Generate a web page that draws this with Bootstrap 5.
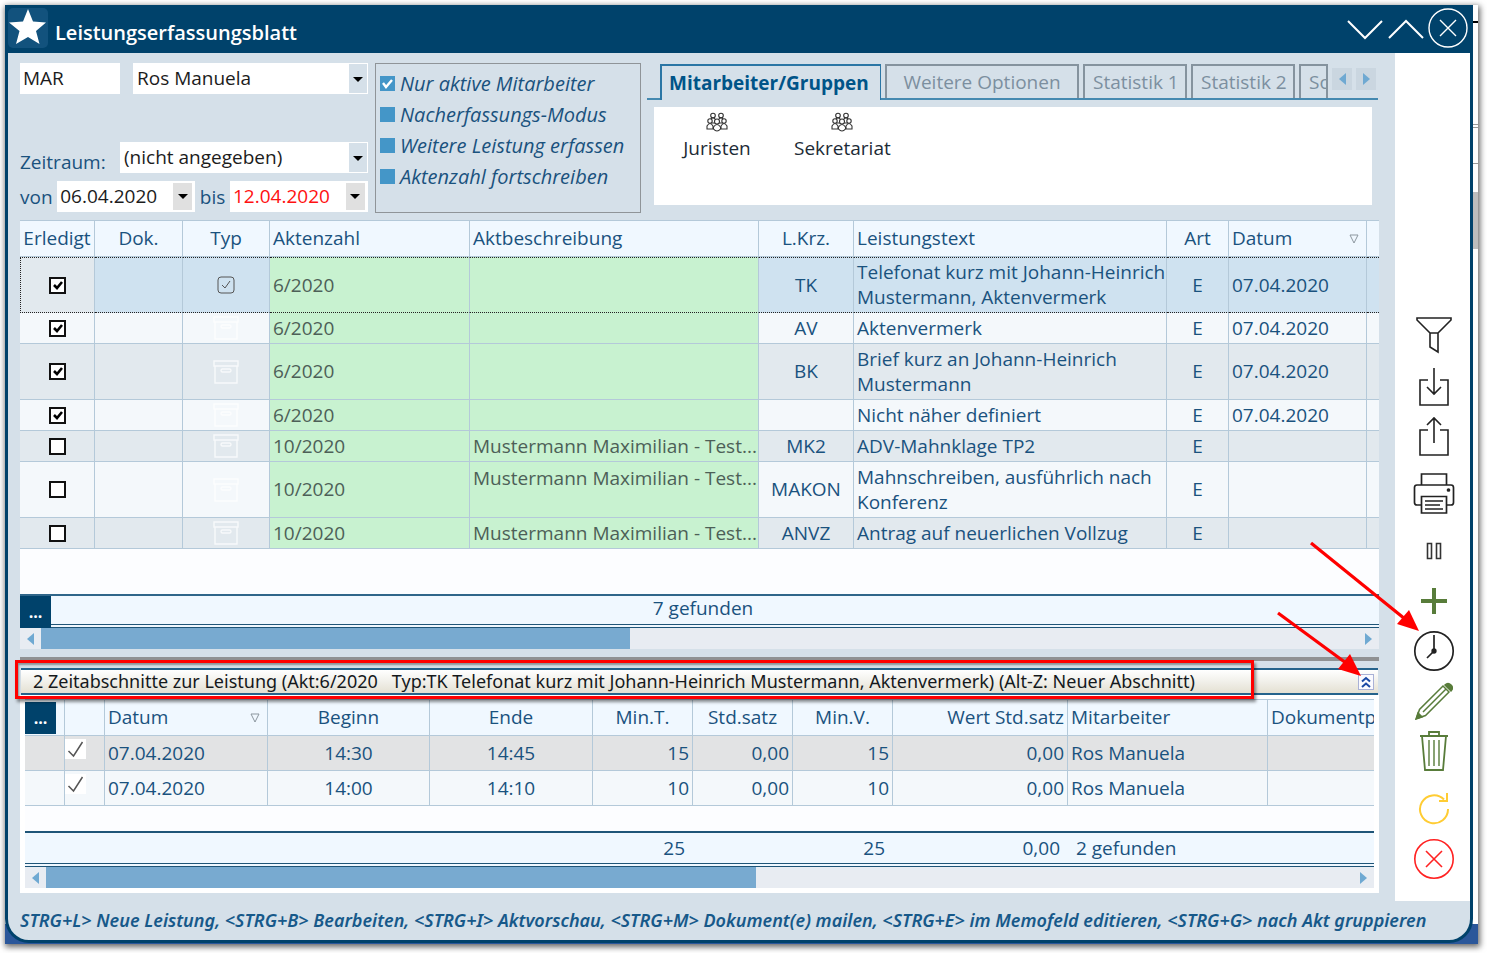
<!DOCTYPE html>
<html lang="de">
<head>
<meta charset="utf-8">
<meta name="viewport" content="width=device-width, initial-scale=1">
<title>Leistungserfassungsblatt</title>
<link href="https://cdn.jsdelivr.net/npm/bootstrap@5.3.0/dist/css/bootstrap.min.css" rel="stylesheet">
<style>
:root{--navy:#00426b;--ink:#1a527e;--panel:#d5e0e9;--line:#b4c9d9;--blue:#78aad0;--green:#587c3a}
body{font-family:"Open Sans","Noto Sans",sans-serif;font-size:19px;line-height:25px;color:var(--ink);background:#fff;padding:5px 9px 9px 5px;min-height:100vh;display:flex}
button{font:inherit;color:inherit;background:none;border:0;padding:0}
svg{display:block;flex:none}
.desktop{flex:1;min-width:0;padding:0 5px 1px 0;display:flex;position:relative;overflow:hidden;
 background:linear-gradient(#000,#000) 0 16px/100% 2px no-repeat,linear-gradient(#999,#999) 0 119px/100% 1px no-repeat,linear-gradient(#999,#999) 0 122px/100% 1px no-repeat,linear-gradient(#999,#999) 0 158px/100% 1px no-repeat,linear-gradient(#bdbdbd,#bdbdbd) 0 187px/100% 57px no-repeat,linear-gradient(#2b579a,#2b579a) 0 100%/100% 20px no-repeat,#fff}
.shot{flex:1;min-width:0;display:flex;box-shadow:1px 2px 6px 1px rgba(0,0,0,.6)}
.app{flex:1;min-width:0;display:flex;flex-direction:column;position:relative;background:var(--panel);border:solid var(--navy);border-width:0 3px 3px 3px;border-radius:0 0 24px 24px;overflow:hidden}
.titlebar{height:48px;background:var(--navy);color:#fff}
.titlebar h1{font-size:20px;line-height:28px;font-weight:600;margin:7px 0 0 7px}
.logo{width:40px;height:40px;background:#12527d;border-radius:5px;margin-top:-2px}
.wincontrols{gap:4px;margin-top:-3px;padding-right:2px}
.main{padding:10px 16px 8px 12px}
.toparea{height:157px}
.fields{width:348px}
.frow{height:31px;display:flex;justify-content:space-between;align-items:flex-start}
.fld{height:31px;border:0;border-radius:0;background-color:#fff;color:#1c1c1c;padding:0 3px;min-width:0;line-height:31px}
.fld:focus{outline:1px solid var(--blue)}
select.fld{appearance:none;padding-left:4px;background-image:url("data:image/svg+xml,%3Csvg xmlns='http://www.w3.org/2000/svg' width='18' height='29'%3E%3Crect width='18' height='29' fill='%23d5e0e9'/%3E%3Cpath d='M4 13h10l-5 5z'/%3E%3C/svg%3E");background-repeat:no-repeat;background-position:right 1px top 1px}
.w-code{width:100px}.w-name{width:235px}.w-period{width:248px}
.datebox{background:#fff;width:138px;height:31px}
.datebox .fld{flex:1;width:100px}
.datebox button{width:19px;height:27px;background:#e0e0e0;margin-right:3px;display:grid;place-items:center}
.overdue{color:#f11!important}
.options{width:266px;height:150px;border:1px solid #8f9498;margin:0 0 0 7px;padding:4px 4px;font-style:italic;font-size:20px}
.options label{height:31px;display:flex;align-items:center;gap:5px;white-space:nowrap}
.options input{appearance:none;width:15px;height:15px;background:#4496c8;margin:0;flex:none}
.options input:checked{background:#4496c8 url("data:image/svg+xml,%3Csvg xmlns='http://www.w3.org/2000/svg' width='15' height='15'%3E%3Cpath d='M3 7l3 4 6-7' fill='none' stroke='%23fff' stroke-width='2.4'/%3E%3C/svg%3E")}
.tabarea{min-width:0;margin-left:6px}
.tabs{height:36px;border-bottom:2px solid #4589b0;margin:1px 1px 0 0;padding-left:13px;gap:4px;flex-wrap:nowrap;list-style:none}
.tabs button.tab{height:34px;border:2px solid #85939e;border-bottom:0;color:#7c8f9f;white-space:nowrap;overflow:hidden;text-align:left;padding:0 8px;width:100%}
.tabs button.on{height:36px;border:2px solid #2b76a5;border-bottom:0;border-right-width:1px;background:var(--panel);color:#005488;font-weight:700;padding:0 7px}
.scroller{width:20px;height:22px;background:#cad6e0;display:grid;place-items:center;margin-top:4px}
.groups{background:#fff;height:98px;margin:7px 7px 0 7px;color:#1d2b36;gap:36px;padding:5px 22px}
.groups button{min-width:82px}
.gridtab{table-layout:fixed;width:100%;border-collapse:separate;border-spacing:0}
.gridtab th,.gridtab td{border:solid var(--line);border-width:0 1px 1px 0;padding:0 3px;font-weight:400;overflow:hidden;white-space:nowrap;vertical-align:middle;text-overflow:clip}
.gridtab th:last-child,.gridtab td:last-child{border-right:0}
.gridtab thead th{background:#f0f8ff;height:36px}
.gridtab .c{text-align:center}.gridtab .r{text-align:right}
.gridtab svg{margin:auto}
.upper{background:#fcfdff;min-height:374px;border-top:1px solid var(--line)}
.upper tbody td{height:31px;background:#f4f8fb}
.upper tbody tr:nth-child(odd) td{background:#e2e9ee}
.upper tbody tr.tall td{height:56px}
.upper tbody tr td.akt{background:#c8f2d0!important;color:#4d6057;padding-right:0}
.upper td.wrap{white-space:normal;padding-right:0}
.upper tbody tr.cur td{background:#cfe2f0;border-top:1px dotted #222;border-bottom:1px dotted #222}
.upper tbody tr.cur td:first-child{background:#e2e9ee;border-left:1px dotted #222}
.box{appearance:none;width:17px;height:17px;border:2px solid #111;background:#fff;display:block;margin:0 auto;border-radius:0}
.box:checked{background:#fff url("data:image/svg+xml,%3Csvg xmlns='http://www.w3.org/2000/svg' width='13' height='13'%3E%3Cpath d='M3 6l3 3 5-6' fill='none' stroke='%23000' stroke-width='2.6'/%3E%3C/svg%3E")}
.more{background:var(--navy);color:#fff!important;width:31px;height:32px;font-weight:700;font-size:16px;line-height:32px;text-align:center;display:block}
.sumbar{height:34px;border-top:2px solid #2f668a;border-bottom:4px double #1f5578;background:#f0f8ff}
.hscroll{height:21px;background:#e8ecf2}
.hscroll button{width:21px;height:21px;display:grid;place-items:center}
.hscroll .thumb{height:21px;background:var(--blue)}
.splitter{height:4px;background:#8f9193;margin-top:8px}
.section{height:27px;margin:7px 1px 0 1px;border:solid #25638c;border-width:2px 0;background:linear-gradient(#fff,#f1f0ea 50%,#e4e0d2);color:#15191c;position:relative;padding:0 4px 0 12px}
.section span{white-space:pre;font-family:"Noto Sans",sans-serif;font-size:18px}
.callout{position:absolute;left:-6px;right:124px;top:-10px;height:39px;border:3px solid #f00;box-shadow:2px 3px 3px rgba(0,0,0,.45),inset 1px 2px 2px rgba(0,0,0,.35);pointer-events:none}
.toggle{width:16px;height:16px;border:1px solid #a9b1d6!important;background:#fafaff!important;display:grid;place-items:center}
.lower{background:#fff;padding:4px 5px 5px}
.lower thead th{border-top:1px solid var(--line);height:37px}
.lower tbody td{height:35px;background:#f4f8fb}
.lower tbody tr:first-child td{background:#e2e3e4}
.lower tbody td svg{margin:-8px 0 0 0;background:#fff}
.lower tfoot .gap td{height:25px;border:0;background:#fcfdff}
.lower tfoot .sum td{height:36px;border:solid #1f5578;border-width:2px 0 4px;border-bottom-style:double;background:#f0f8ff;padding:0 8px}
.rail{width:75px;background:#fff;padding:0 0 17px 1px}
.rail button{height:50px;width:75px;display:grid;place-items:center}
.statusline{height:39px;line-height:39px;padding:0 13px 0 12px;font-family:"Noto Sans",sans-serif;font-style:italic;font-weight:600;font-size:18px;color:#17598a}
.statusline div{overflow:hidden;white-space:nowrap}
.arrows{position:absolute;right:49px;top:530px;pointer-events:none}
</style>
</head>
<body>
<svg width="0" height="0" class="position-absolute">
<symbol id="arch" viewBox="0 0 26 24"><g fill="none" stroke="#fff" stroke-opacity=".75" stroke-width="1.4"><path d="M1 1h24v5H1zM2 6v17h22V6"/><rect x="8" y="9" width="10" height="3" rx="1.500"/></g></symbol>
<symbol id="left" viewBox="0 0 7 12"><path d="M7 0v12L0 6z" fill="#6fa9d2"/></symbol>
<symbol id="right" viewBox="0 0 7 12"><path d="M0 0v12l7-6z" fill="#6fa9d2"/></symbol>
<symbol id="sort" viewBox="0 0 10 10"><path d="M1 1h8L5 9z" fill="none" stroke="#8c979f"/></symbol>
<symbol id="tick" viewBox="0 0 20 20"><path d="M3 12l5 5L17 3" fill="none" stroke="#555" stroke-width="1.500"/></symbol>
<symbol id="people" viewBox="0 0 22 20"><g fill="#fff" stroke="#333" stroke-width="1.100"><circle cx="7" cy="3.500" r="2.300"/><circle cx="15" cy="3.500" r="2.300"/><path d="M4 11V8q3-4 6 0v3zM12 11V8q3-4 6 0v3z"/><circle cx="4" cy="9" r="2.200"/><circle cx="18" cy="9" r="2.200"/><path d="M1 17v-3q3-5 6 0v3zM15 17v-3q3-5 6 0v3z"/><circle cx="11" cy="9.500" r="2.500"/><path d="M7.500 17v-2q3.500-5 7 0v2q-3.500 4-7 0z"/></g></symbol>
</svg>
<div class="shot">
<div class="desktop">
<main class="app">
  <header class="titlebar d-flex align-items-center">
    <div class="logo"><svg width="40" height="40" viewBox="0 0 40 40"><path fill="#fff" d="M20 1l5 12.500 13 1-10 8.500 3.500 13L20 29 8 36l3.500-13L1 14.500l14-1z"/></svg></div>
    <h1>Leistungserfassungsblatt</h1>
    <div class="wincontrols d-flex align-items-center ms-auto">
      <button type="button" aria-label="Minimieren"><svg width="37" height="40" viewBox="0 0 37 40" fill="none" stroke="#fff" stroke-width="2"><path d="M2 13l17 17L36 13"/></svg></button>
      <button type="button" aria-label="Maximieren"><svg width="37" height="40" viewBox="0 0 37 40" fill="none" stroke="#fff" stroke-width="2"><path d="M2 30l17-17L36 30"/></svg></button>
      <button type="button" aria-label="Schließen"><svg width="40" height="40" viewBox="0 0 40 40" fill="none" stroke="#fff" stroke-width="1.400"><circle cx="20" cy="20" r="19"/><path d="M12 12l16 16M28 12L12 28"/></svg></button>
    </div>
  </header>
  <div class="d-flex flex-grow-1">
    <div class="main flex-grow-1 d-flex flex-column overflow-hidden">
      <div class="toparea d-flex">
        <div class="fields d-flex flex-column">
          <div class="frow">
            <input class="fld w-code" value="MAR" aria-label="Kürzel">
            <select class="fld w-name" aria-label="Mitarbeiter"><option>Ros Manuela</option></select>
          </div>
          <div class="frow mt-auto">
            <label for="zr" class="pt-2">Zeitraum:</label>
            <select id="zr" class="fld w-period"><option>(nicht angegeben)</option></select>
          </div>
          <div class="frow mt-2 mb-2">
            <label for="von" class="pt-1">von</label>
            <div class="datebox d-flex align-items-center"><input id="von" class="fld" value="06.04.2020"><button type="button" aria-label="Kalender von"><svg width="10" height="6"><path d="M0 0h10L5 5z"/></svg></button></div>
            <label for="bis" class="pt-1">bis</label>
            <div class="datebox d-flex align-items-center"><input id="bis" class="fld overdue" value="12.04.2020"><button type="button" aria-label="Kalender bis"><svg width="10" height="6"><path d="M0 0h10L5 5z"/></svg></button></div>
          </div>
        </div>
        <fieldset class="options">
          <label><input type="checkbox" checked>Nur aktive Mitarbeiter</label>
          <label><input type="checkbox">Nacherfassungs-Modus</label>
          <label><input type="checkbox">Weitere Leistung erfassen</label>
          <label><input type="checkbox">Aktenzahl fortschreiben</label>
        </fieldset>
        <div class="tabarea flex-grow-1">
          <ul class="tabs d-flex mb-0">
            <li style="width:221px"><button type="button" class="tab on">Mitarbeiter/Gruppen</button></li>
            <li style="width:194px"><button type="button" class="tab text-center">Weitere Optionen</button></li>
            <li style="width:104px"><button type="button" class="tab">Statistik 1</button></li>
            <li style="width:104px"><button type="button" class="tab">Statistik 2</button></li>
            <li style="width:29px"><button type="button" class="tab" aria-label="Sonstiges">Sonstiges</button></li>
            <li><button type="button" class="scroller" aria-label="Zurück"><svg width="7" height="12"><use href="#left"/></svg></button></li>
            <li><button type="button" class="scroller" aria-label="Weiter"><svg width="7" height="12"><use href="#right"/></svg></button></li>
          </ul>
          <div class="groups d-flex align-items-start">
            <button type="button"><svg class="mx-auto mb-1" width="22" height="20"><use href="#people"/></svg>Juristen</button>
            <button type="button"><svg class="mx-auto mb-1" width="22" height="20"><use href="#people"/></svg>Sekretariat</button>
          </div>
        </div>
      </div>

      <div class="upper flex-grow-1">
        <table class="gridtab">
          <colgroup><col style="width:75px"><col style="width:88px"><col style="width:87px"><col style="width:200px"><col style="width:289px"><col style="width:95px"><col style="width:313px"><col style="width:62px"><col style="width:138px"><col></colgroup>
          <thead><tr><th class="c">Erledigt</th><th class="c">Dok.</th><th class="c">Typ</th><th>Aktenzahl</th><th>Aktbeschreibung</th><th class="c">L.Krz.</th><th>Leistungstext</th><th class="c">Art</th><th><div class="d-flex align-items-center justify-content-between pe-1">Datum<svg class="m-0" width="10" height="10"><use href="#sort"/></svg></div></th><th></th></tr></thead>
          <tbody>
            <tr class="tall cur"><td><input class="box" type="checkbox" checked aria-label="Erledigt"></td><td></td><td><svg width="18" height="18" viewBox="0 0 18 18" fill="none" stroke="#555"><rect x="1" y="1" width="16" height="16" rx="3"/><path d="M5 9l3 3 5-7"/></svg></td><td class="akt">6/2020</td><td class="akt"></td><td class="c">TK</td><td class="wrap">Telefonat kurz mit Johann-Heinrich Mustermann, Aktenvermerk</td><td class="c">E</td><td>07.04.2020</td><td></td></tr>
            <tr><td><input class="box" type="checkbox" checked aria-label="Erledigt"></td><td></td><td><svg width="26" height="24"><use href="#arch"/></svg></td><td class="akt">6/2020</td><td class="akt"></td><td class="c">AV</td><td>Aktenvermerk</td><td class="c">E</td><td>07.04.2020</td><td></td></tr>
            <tr class="tall"><td><input class="box" type="checkbox" checked aria-label="Erledigt"></td><td></td><td><svg width="26" height="24"><use href="#arch"/></svg></td><td class="akt">6/2020</td><td class="akt"></td><td class="c">BK</td><td class="wrap">Brief kurz an Johann-Heinrich Mustermann</td><td class="c">E</td><td>07.04.2020</td><td></td></tr>
            <tr><td><input class="box" type="checkbox" checked aria-label="Erledigt"></td><td></td><td><svg width="26" height="24"><use href="#arch"/></svg></td><td class="akt">6/2020</td><td class="akt"></td><td></td><td>Nicht näher definiert</td><td class="c">E</td><td>07.04.2020</td><td></td></tr>
            <tr><td><input class="box" type="checkbox" aria-label="Erledigt"></td><td></td><td><svg width="26" height="24"><use href="#arch"/></svg></td><td class="akt">10/2020</td><td class="akt">Mustermann Maximilian - Test...</td><td class="c">MK2</td><td>ADV-Mahnklage TP2</td><td class="c">E</td><td></td><td></td></tr>
            <tr class="tall"><td><input class="box" type="checkbox" aria-label="Erledigt"></td><td></td><td><svg width="26" height="24"><use href="#arch"/></svg></td><td class="akt">10/2020</td><td class="akt align-top pt-1">Mustermann Maximilian - Test...</td><td class="c">MAKON</td><td class="wrap">Mahnschreiben, ausführlich nach Konferenz</td><td class="c">E</td><td></td><td></td></tr>
            <tr><td><input class="box" type="checkbox" aria-label="Erledigt"></td><td></td><td><svg width="26" height="24"><use href="#arch"/></svg></td><td class="akt">10/2020</td><td class="akt">Mustermann Maximilian - Test...</td><td class="c">ANVZ</td><td>Antrag auf neuerlichen Vollzug</td><td class="c">E</td><td></td><td></td></tr>
          </tbody>
        </table>
      </div>
      <div class="sumbar d-flex"><button type="button" class="more">...</button><div class="flex-grow-1 text-center pe-4">7 gefunden</div></div>
      <div class="hscroll d-flex"><button type="button" aria-label="Links"><svg width="7" height="12"><use href="#left"/></svg></button><div class="flex-grow-1"><div class="thumb" style="width:44.700%"></div></div><button type="button" aria-label="Rechts"><svg width="7" height="12"><use href="#right"/></svg></button></div>
      <div class="splitter"></div>
      <div class="section d-flex align-items-center justify-content-between">
        <span>2 Zeitabschnitte zur Leistung (Akt:6/2020   Typ:TK Telefonat kurz mit Johann-Heinrich Mustermann, Aktenvermerk) (Alt-Z: Neuer Abschnitt)</span>
        <button type="button" class="toggle" aria-label="Einklappen"><svg width="10" height="12" viewBox="0 0 10 12" fill="none" stroke="#1a49a5" stroke-width="2"><path d="M1 5.500L5 2l4 3.500M1 11l4-3.500L9 11"/></svg></button>
        <div class="callout"></div>
      </div>
      <div class="lower">
        <table class="gridtab">
          <colgroup><col style="width:40px"><col style="width:40px"><col style="width:163px"><col style="width:162px"><col style="width:163px"><col style="width:100px"><col style="width:100px"><col style="width:100px"><col style="width:175px"><col style="width:200px"><col></colgroup>
          <thead><tr><th class="p-0"><button type="button" class="more">...</button></th><th></th><th><div class="d-flex align-items-center justify-content-between pe-1">Datum<svg class="m-0" width="10" height="10"><use href="#sort"/></svg></div></th><th class="c">Beginn</th><th class="c">Ende</th><th class="c">Min.T.</th><th class="c">Std.satz</th><th class="c">Min.V.</th><th class="r">Wert Std.satz</th><th>Mitarbeiter</th><th>Dokumentpfad</th></tr></thead>
          <tbody>
            <tr><td></td><td class="ps-0"><svg width="21" height="20" viewBox="0 0 20 20"><use href="#tick"/></svg></td><td>07.04.2020</td><td class="c">14:30</td><td class="c">14:45</td><td class="r">15</td><td class="r">0,00</td><td class="r">15</td><td class="r">0,00</td><td>Ros Manuela</td><td></td></tr>
            <tr><td></td><td class="ps-0"><svg width="21" height="20" viewBox="0 0 20 20"><use href="#tick"/></svg></td><td>07.04.2020</td><td class="c">14:00</td><td class="c">14:10</td><td class="r">10</td><td class="r">0,00</td><td class="r">10</td><td class="r">0,00</td><td>Ros Manuela</td><td></td></tr>
          </tbody>
          <tfoot>
            <tr class="gap"><td colspan="11"></td></tr>
            <tr class="sum"><td colspan="5"></td><td class="r">25</td><td></td><td class="r">25</td><td class="r">0,00</td><td>2 gefunden</td><td></td></tr>
          </tfoot>
        </table>
        <div class="hscroll d-flex"><button type="button" aria-label="Links"><svg width="7" height="12"><use href="#left"/></svg></button><div class="flex-grow-1"><div class="thumb" style="width:54.300%"></div></div><button type="button" aria-label="Rechts"><svg width="7" height="12"><use href="#right"/></svg></button></div>
      </div>
    </div>

    <nav class="rail d-flex flex-column justify-content-end flex-shrink-0" aria-label="Werkzeuge">
      <button type="button" aria-label="Filter"><svg width="40" height="40" viewBox="0 0 40 40" fill="none" stroke="#222" stroke-width="1.600"><path d="M3 3h34v2L24 18H16L3 5zM16 18v14l8 5V18"/></svg></button>
      <button type="button" aria-label="Importieren"><svg width="40" height="44" viewBox="0 0 40 44" fill="none" stroke="#222" stroke-width="1.600"><path d="M14 17H6v25h28V17h-8M20 5v26M13 24l7 7 7-7"/></svg></button>
      <button type="button" aria-label="Exportieren"><svg width="40" height="44" viewBox="0 0 40 44" fill="none" stroke="#222" stroke-width="1.600"><path d="M14 17H6v25h28V17h-8M20 30V5M13 12l7-7 7 7"/></svg></button>
      <button type="button" class="mt-2" aria-label="Drucken"><svg width="42" height="42" viewBox="0 0 42 42" fill="none" stroke="#222" stroke-width="1.700"><path d="M8.500 13V2h25v11M8.500 33H4q-2.500 0-2.500-2.500v-15Q1.500 13 4 13h34q2.500 0 2.500 2.500v15Q40.500 33 38 33h-4.500"/><path d="M8.500 24.500h25V41h-25zM12 29h18M12 33h15M12 37h18"/><circle cx="35.500" cy="18" r="1" fill="#222"/></svg></button>
      <button type="button" class="mt-2" aria-label="Pause"><svg width="16" height="18" viewBox="0 0 16 18" fill="none" stroke="#333" stroke-width="1.600"><path d="M1.500 1.500h4v15h-4zM10.500 1.500h4v15h-4z"/></svg></button>
      <button type="button" aria-label="Neu"><svg width="28" height="28" viewBox="0 0 28 28" stroke="#587c3a" stroke-width="4"><path d="M14 1v26M1 14h26"/></svg></button>
      <button type="button" aria-label="Zeit"><svg width="42" height="42" viewBox="0 0 42 42" fill="none" stroke="#222" stroke-width="1.700"><circle cx="21" cy="21" r="19.200"/><path d="M21 5v16l-7 7"/><circle cx="21" cy="21" r="1.800" fill="#222"/></svg></button>
      <button type="button" aria-label="Bearbeiten"><svg width="38" height="38" viewBox="0 0 38 38" fill="none" stroke="#587c3a" stroke-width="1.500"><path d="M1.500 36.500l3-9L28 4l6 6L10.500 33.500zM8 30L31 7"/><path d="M1 37l2-6 4 4zM30 3q3-3 6 0t0 6z" fill="#587c3a"/></svg></button>
      <button type="button" aria-label="Löschen"><svg width="30" height="42" viewBox="0 0 30 42" fill="none" stroke="#587c3a" stroke-width="1.800"><path d="M1 6h28M10 6V2h10v4M3 6l3 34h18l3-34"/><path stroke-width="1.400" d="M10 10v26M15 10v26M20 10v26"/></svg></button>
      <button type="button" class="mt-2" aria-label="Aktualisieren"><svg width="32" height="32" viewBox="0 0 32 32" fill="none" stroke="#fc3" stroke-width="2"><path d="M30 16A14 14 0 1 1 26 6.500M29 0v8h-8"/></svg></button>
      <button type="button" aria-label="Abbrechen"><svg width="42" height="42" viewBox="0 0 42 42" fill="none" stroke="#f22" stroke-width="1.600"><circle cx="21" cy="21" r="19.200"/><path d="M13 13l16 16M29 13L13 29"/></svg></button>
    </nav>
  </div>
  <footer class="statusline"><div>STRG+L&gt; Neue Leistung, &lt;STRG+B&gt; Bearbeiten, &lt;STRG+I&gt; Aktvorschau, &lt;STRG+M&gt; Dokument(e) mailen, &lt;STRG+E&gt; im Memofeld editieren, &lt;STRG+G&gt; nach Akt gruppieren</div></footer>
  <svg class="arrows" width="150" height="155" viewBox="1270 535 150 155"><g stroke="#f00" stroke-width="3.200" fill="#f00"><path d="M1310 543l94 76"/><path stroke="none" d="M1418 631l-22-7 12-14z"/><path d="M1277 613l68 50"/><path stroke="none" d="M1360 676l-23-7 12-15z"/></g></svg>
</main>
</div>
</div>
<script src="https://cdn.jsdelivr.net/npm/bootstrap@5.3.0/dist/js/bootstrap.bundle.min.js"></script>
</body>
</html>
